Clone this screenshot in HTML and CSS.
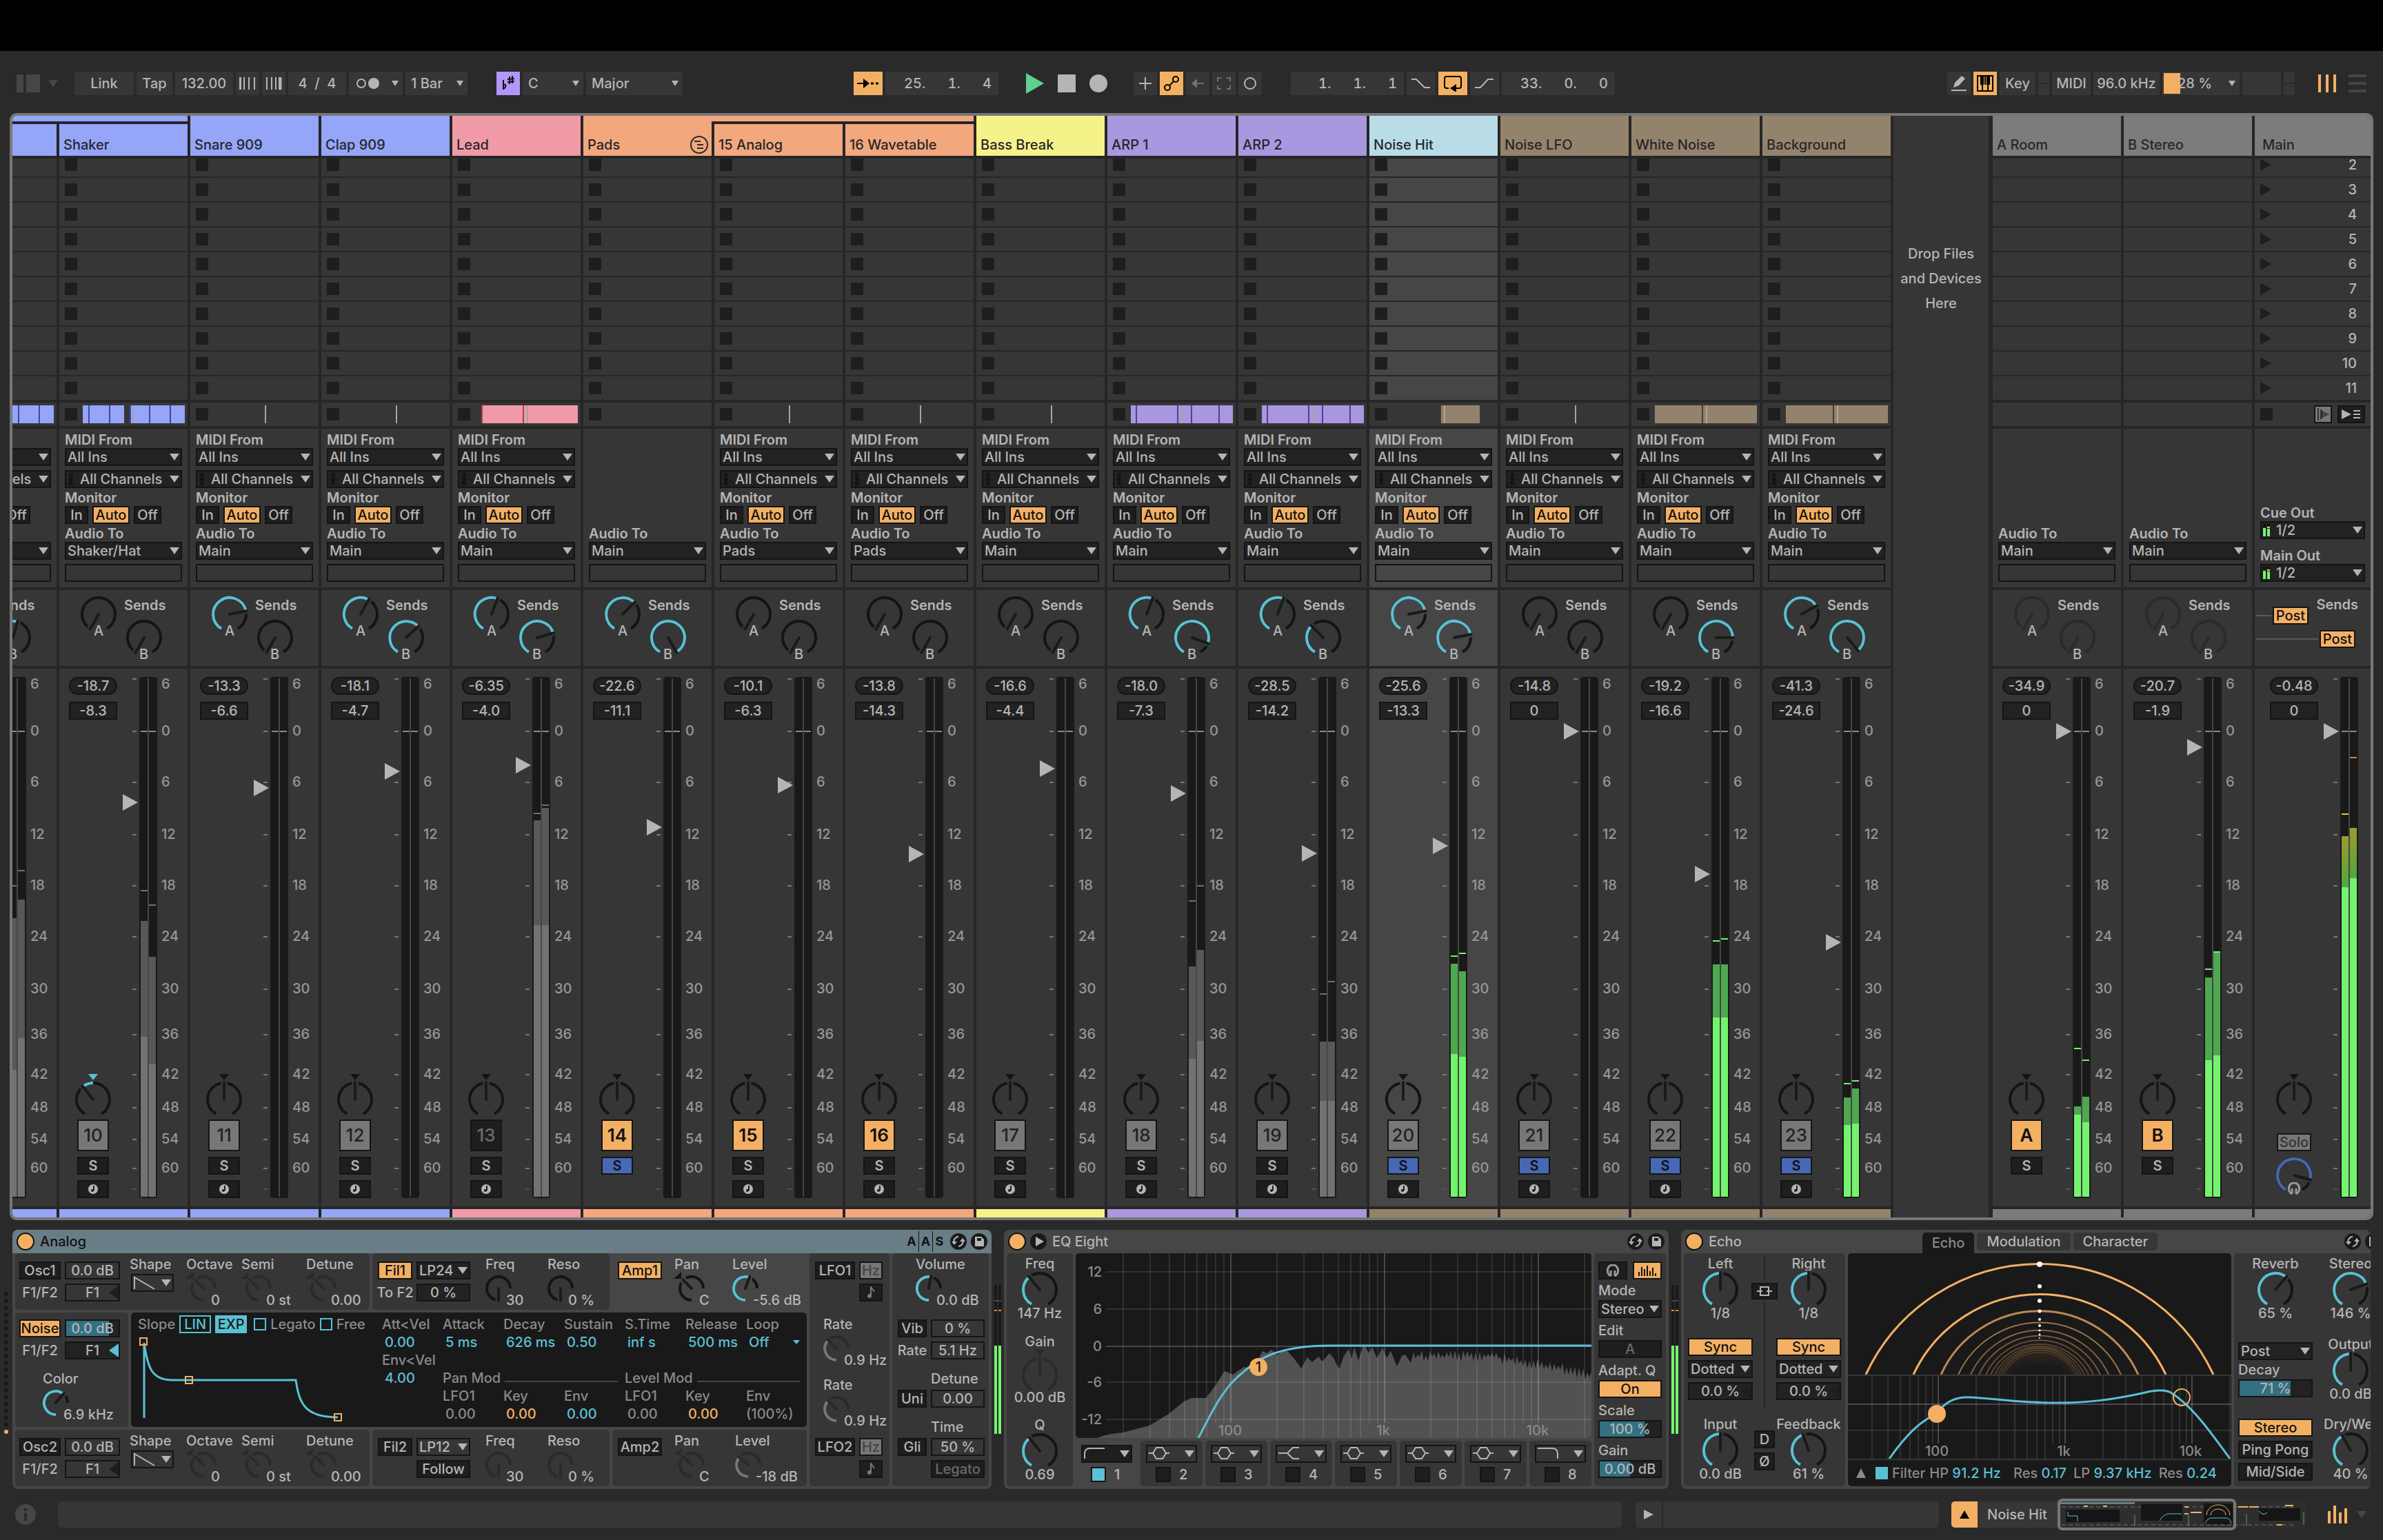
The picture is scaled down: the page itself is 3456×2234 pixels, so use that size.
FILE: index.html
```html
<!DOCTYPE html>
<html lang="en">
<head>
    <meta charset="UTF-8">
    <meta name="viewport" content="width=device-width, initial-scale=1.0">
    <title>Live Set</title>
    <link rel="stylesheet" href="styles.css">
</head>
<body>
    <div class="screen-top"></div>

    <header class="toolbar">
        <button class="browser-toggle" aria-label="Browser">
            <svg width="60" height="26"><path d="M0 0h10v26H0zM14 0h20v26H14z" fill="#464646"/><path d="M46 8h14l-7 11z" fill="#464646"/></svg>
        </button>
        <div class="group tempo">
            <button class="tool w86">Link</button>
            <button class="tool w52">Tap</button>
            <input class="tool w84" value="132.00" aria-label="Tempo">
            <button class="tool w34" aria-label="Nudge down"><svg width="24" height="20"><path d="M2 1v18M7 1v18M14 1v18M22 1v18" stroke="#b5b5b5" stroke-width="2"/><path d="M1 1v18" stroke="#b5b5b5" stroke-width="2"/></svg></button>
            <button class="tool w34" aria-label="Nudge up"><svg width="24" height="20"><path d="M2 1v18M9 1v18M15 1v18M20 1v18" stroke="#b5b5b5" stroke-width="2"/><path d="M22 1v18" stroke="#b5b5b5" stroke-width="3"/></svg></button>
            <input class="tool w84" value="4  /  4" aria-label="Time signature">
            <button class="tool w78 metro" aria-label="Metronome"><svg width="34" height="16"><circle cx="8" cy="8" r="6" fill="none" stroke="#b5b5b5" stroke-width="2"/><circle cx="26" cy="8" r="8" fill="#b5b5b5"/></svg><span class="caret"></span></button>
            <select class="tool w90 pick" aria-label="Quantization"><option>1 Bar</option></select>
        </div>
        <div class="group scale">
            <button class="tool w34 purple" aria-label="Scale mode"><svg width="20" height="22"><path d="M3 6v14M3 19c4-2 5-8 0-6" fill="none" stroke="#111" stroke-width="2"/><path d="M12 1v11M16 0v11M9 5l10-1M9 9l10-1" stroke="#111" stroke-width="2"/></svg></button>
            <select class="tool w88 pick" aria-label="Root note"><option>C</option></select>
            <select class="tool w140 pick" aria-label="Scale"><option>Major</option></select>
        </div>

        <div class="group transport">
            <button class="tool w42 orange" aria-label="Follow"><svg width="32" height="18"><path d="M0 9h12" stroke="#000" stroke-width="2"/><path d="M9 2l9 7-9 7z"/><path d="M20 9h4M27 9h4" stroke="#000" stroke-width="3"/></svg></button>
            <input class="tool w164 position" value="25.      1.      4" aria-label="Position">
        </div>
        <div class="group run">
            <button class="bare" aria-label="Play"><svg width="26" height="30"><path d="M0 0l26 15L0 30z" fill="#5fd18f"/></svg></button>
            <button class="bare" aria-label="Stop"><svg width="26" height="26"><path d="M0 0h26v26H0z" fill="#b5b5b5"/></svg></button>
            <button class="bare" aria-label="Record"><svg width="26" height="26"><circle cx="13" cy="13" r="13" fill="#b5b5b5"/></svg></button>
        </div>
        <div class="group overdub">
            <button class="tool w34" aria-label="Overdub"><svg width="18" height="18"><path d="M9 0v18M0 9h18" stroke="#b5b5b5" stroke-width="2"/></svg></button>
            <button class="tool w34 orange" aria-label="Automation arm"><svg width="24" height="24"><circle cx="18" cy="6" r="4" fill="none" stroke="#000" stroke-width="2"/><circle cx="6" cy="18" r="4" fill="none" stroke="#000" stroke-width="2"/><path d="M9 15l6-6" stroke="#000" stroke-width="2"/></svg></button>
            <button class="tool w34" aria-label="Re-enable automation"><svg width="18" height="14"><path d="M0 7l8-7v14z" fill="#707070"/><path d="M6 7h12" stroke="#707070" stroke-width="2"/></svg></button>
            <button class="tool w34" aria-label="Capture"><svg width="20" height="18"><path d="M6 1H1v5M14 1h5v5M6 17H1v-5M14 17h5v-5" fill="none" stroke="#707070" stroke-width="2"/></svg></button>
            <button class="tool w34" aria-label="Session record"><svg width="20" height="20"><circle cx="10" cy="10" r="8" fill="none" stroke="#b5b5b5" stroke-width="2"/></svg></button>
        </div>
        <div class="group loop">
            <input class="tool w164 position" value="1.      1.      1" aria-label="Loop start">
            <button class="tool w42" aria-label="Punch in"><svg width="28" height="14"><path d="M0 1h7l12 12h8" fill="none" stroke="#b5b5b5" stroke-width="2"/></svg></button>
            <button class="tool w42 orange" aria-label="Loop"><svg width="28" height="24"><path d="M8 19H5q-3 0-3-3V5q0-3 3-3h18q3 0 3 3v11q0 3-3 3h-4" fill="none" stroke="#000" stroke-width="2"/><path d="M10 19l9-6v12z"/></svg></button>
            <button class="tool w42" aria-label="Punch out"><svg width="28" height="14"><path d="M0 13h8L19 1h8" fill="none" stroke="#b5b5b5" stroke-width="2"/></svg></button>
            <input class="tool w164 position" value="33.      0.      0" aria-label="Loop length">
        </div>

        <div class="group prefs">
            <button class="tool w34" aria-label="Draw mode"><svg width="24" height="24"><path d="M4 18l2-7L16 1l5 4-9 10z" fill="#b5b5b5"/><path d="M1 22h22" stroke="#b5b5b5" stroke-width="2"/></svg></button>
            <button class="tool w34 orange" aria-label="Computer MIDI keyboard"><svg width="24" height="24"><path d="M1 1h22v22H1z" fill="none" stroke="#000" stroke-width="2"/><path d="M5 2h5v12H5zM14 2h5v12h-5z"/><path d="M8 13v9M16 13v9M12 2v12" stroke="#000" stroke-width="2"/></svg></button>
            <button class="tool w52">Key</button>
            <span class="io-led"><i></i><i></i></span>
            <button class="tool w56">MIDI</button>
            <button class="tool w96">96.0 kHz</button>
            <select class="tool w112 pick cpu" aria-label="CPU load"><option>28 %</option></select>
            <span class="tool w56"></span>
            <span class="io-led"><i></i><i></i></span>
        </div>
        <div class="group views">
            <button class="bare" aria-label="Session view"><svg width="28" height="26"><path d="M2 0v26M13 0v26M24 0v26" stroke="#f3b063" stroke-width="4"/></svg></button>
            <button class="bare" aria-label="Arrangement view"><svg width="26" height="26"><path d="M0 2h26M0 13h26M0 24h26" stroke="#464646" stroke-width="4"/></svg></button>
        </div>
    </header>

    <main class="session" id="session"></main>

    <section class="rack">
        <svg class="rack-dots" id="rackDots" width="6" height="216"></svg>

        <article class="device analog">
            <div class="device-title blue">
                <button class="power" aria-label="Analog on"></button>
                <h2>Analog</h2>
                <div class="aas"><b>A</b><b>A</b><b>S</b></div>
                <button class="round" aria-label="Hot-swap"><svg viewBox="-12 -12 24 24"><use href="#swap"/></svg></button>
                <button class="round" aria-label="Save preset"><svg viewBox="-12 -12 24 24"><use href="#disk"/></svg></button>
            </div>
            <div class="analog-body">
                <div class="analog-main">
                    <div class="strip">
                        <div class="panel osc">
                            <div class="src">
                                <button class="btn">Osc1</button><input class="num" value="0.0 dB" aria-label="Osc1 level">
                                <span class="lbl mid">F1/F2</span><input class="num bal" value="F1" aria-label="Osc1 balance">
                            </div>
                            <div class="shape"><span class="lbl">Shape</span><button class="picker clear" aria-label="Osc1 shape"><svg width="32" height="20"><path d="M1 19V2l29 17" fill="none" stroke="#b5b5b5" stroke-width="2"/></svg><span class="caret"></span></button></div>
                            <div class="dial w80"><span class="lbl">Octave</span><span data-knob="bi" data-at="-45" data-off></span><output>0</output></div>
                            <div class="dial w94"><span class="lbl">Semi</span><span data-knob="bi" data-at="-45" data-off></span><output>0 st</output></div>
                            <div class="dial"><span class="lbl">Detune</span><span data-knob="bi" data-at="-45" data-off></span><output>0.00</output></div>
                        </div>
                        <div class="panel filter">
                            <div class="src">
                                <button class="btn on">Fil1</button><select class="menu" aria-label="Filter 1 type"><option>LP24</option></select>
                                <span class="lbl mid">To F2</span><input class="num" value="0 %" aria-label="To F2">
                            </div>
                            <div class="dial w90"><span class="lbl">Freq</span><span data-knob="uni" data-at="-180"></span><output>30</output></div>
                            <div class="dial"><span class="lbl">Reso</span><span data-knob="uni" data-at="-180"></span><output>0 %</output></div>
                        </div>
                        <div class="panel amp chosen">
                            <button class="btn on">Amp1</button>
                            <div class="dial w88"><span class="lbl">Pan</span><span data-knob="bi" data-at="-45"></span><output>C</output></div>
                            <div class="dial"><span class="lbl">Level</span><span data-knob="uni" data-at="20"></span><output>-5.6 dB</output></div>
                        </div>
                    </div>
                    <div class="strip tall">
                        <div class="panel noise">
                            <div class="src">
                                <button class="btn on">Noise</button><input class="num fill" style="--fill:82%" value="0.0 dB" aria-label="Noise level">
                                <span class="lbl mid">F1/F2</span><input class="num bal teal" value="F1" aria-label="Noise balance">
                            </div>
                            <div class="dial"><span class="lbl">Color</span><span data-knob="uni" data-at="40"></span><output>6.9 kHz</output></div>
                        </div>
                        <div class="lcd envelope">
                            <div class="env">
                                <div class="env-top">
                                    <span>Slope</span>
                                    <button class="cyan-btn">LIN</button>
                                    <button class="cyan-btn on">EXP</button>
                                    <label><input type="checkbox">Legato</label>
                                    <label><input type="checkbox">Free</label>
                                </div>
                                <svg width="364" height="132"><path d="M19 123V14C24 50 30 68 60 68H239C244 100 250 122 300 122" fill="none" stroke="#5bc0d6" stroke-width="3"/><g fill="none" stroke="#f3b063" stroke-width="2"><path d="M13 7h10v10H13zM79 63h10v10H79zM295 117h10v10h-10z"/></g></svg>
                            </div>
                            <div class="params">
                                <span>Att&lt;Vel</span><span>Attack</span><span>Decay</span><span>Sustain</span><span>S.Time</span><span>Release</span><span>Loop</span>
                                <b>0.00</b><b>5 ms</b><b>626 ms</b><b>0.50</b><b>inf s</b><b>500 ms</b><b class="loop-off">Off</b>
                                <span class="row-start">Env&lt;Vel</span>
                                <b class="row-start">4.00</b><span class="rule">Pan Mod</span><span class="rule">Level Mod</span>
                                <span class="second">LFO1</span><span>Key</span><span>Env</span><span>LFO1</span><span>Key</span><span>Env</span>
                                <b class="second grey">0.00</b><b class="amber">0.00</b><b>0.00</b><b class="grey">0.00</b><b class="amber">0.00</b><span>(100%)</span>
                            </div>
                        </div>
                    </div>
                    <div class="strip">
                        <div class="panel osc">
                            <div class="src">
                                <button class="btn">Osc2</button><input class="num" value="0.0 dB" aria-label="Osc2 level">
                                <span class="lbl mid">F1/F2</span><input class="num bal" value="F1" aria-label="Osc2 balance">
                            </div>
                            <div class="shape"><span class="lbl">Shape</span><button class="picker clear" aria-label="Osc2 shape"><svg width="32" height="20"><path d="M1 19V2l29 17" fill="none" stroke="#b5b5b5" stroke-width="2"/></svg><span class="caret"></span></button></div>
                            <div class="dial w80"><span class="lbl">Octave</span><span data-knob="bi" data-at="-45" data-off></span><output>0</output></div>
                            <div class="dial w94"><span class="lbl">Semi</span><span data-knob="bi" data-at="-45" data-off></span><output>0 st</output></div>
                            <div class="dial"><span class="lbl">Detune</span><span data-knob="bi" data-at="-45" data-off></span><output>0.00</output></div>
                        </div>
                        <div class="panel filter">
                            <div class="src">
                                <button class="btn">Fil2</button><select class="menu clear" aria-label="Filter 2 type"><option>LP12</option></select>
                                <span></span><button class="btn">Follow</button>
                            </div>
                            <div class="dial w90"><span class="lbl">Freq</span><span data-knob="uni" data-at="-180" data-off></span><output>30</output></div>
                            <div class="dial"><span class="lbl">Reso</span><span data-knob="uni" data-at="-180" data-off></span><output>0 %</output></div>
                        </div>
                        <div class="panel amp">
                            <button class="btn">Amp2</button>
                            <div class="dial w88"><span class="lbl">Pan</span><span data-knob="bi" data-at="-45" data-off></span><output>C</output></div>
                            <div class="dial"><span class="lbl">Level</span><span data-knob="uni" data-at="-50" data-off></span><output>-18 dB</output></div>
                        </div>
                    </div>
                </div>
                <div class="panel lfo">
                    <div class="lfo-src"><button class="btn">LFO1</button><button class="btn grey">Hz</button><button class="btn note" aria-label="LFO1 sync"><svg width="12" height="18"><use href="#note"/></svg></button></div>
                    <div class="dial"><span class="lbl">Rate</span><span data-knob="uni" data-at="-45" data-off></span><output>0.9 Hz</output></div>
                    <div class="dial"><span class="lbl">Rate</span><span data-knob="uni" data-at="-45" data-off></span><output>0.9 Hz</output></div>
                    <div class="lfo-src"><button class="btn">LFO2</button><button class="btn grey">Hz</button><button class="btn note" aria-label="LFO2 sync"><svg width="12" height="18"><use href="#note"/></svg></button></div>
                </div>
                <div class="panel volume">
                    <div class="dial"><span class="lbl">Volume</span><span data-knob="uni" data-at="10"></span><output>0.0 dB</output></div>
                    <div class="pairs">
                        <button class="btn">Vib</button><input class="num" value="0 %" aria-label="Vibrato amount">
                        <span class="lbl mid">Rate</span><input class="num" value="5.1 Hz" aria-label="Vibrato rate">
                    </div>
                    <div class="pairs">
                        <span></span><span class="lbl">Detune</span>
                        <button class="btn">Uni</button><input class="num" value="0.00" aria-label="Unison detune">
                    </div>
                    <div class="pairs">
                        <span></span><span class="lbl">Time</span>
                        <button class="btn">Gli</button><input class="num" value="50 %" aria-label="Glide time">
                        <span></span><button class="btn faint">Legato</button>
                    </div>
                </div>
            </div>
        </article>

        <svg class="device-meter" width="10" height="216"><use href="#devMeter"/></svg>

        <article class="device eq">
            <div class="device-title">
                <button class="power" aria-label="EQ Eight on"></button>
                <button class="round" aria-label="Unfold"><svg viewBox="-12 -12 24 24"><path d="M-4-7L8 0-4 7z" fill="#b5b5b5"/></svg></button>
                <h2>EQ Eight</h2>
                <button class="round push" aria-label="Hot-swap"><svg viewBox="-12 -12 24 24"><use href="#swap"/></svg></button>
                <button class="round" aria-label="Save preset"><svg viewBox="-12 -12 24 24"><use href="#disk"/></svg></button>
            </div>
            <div class="device-body">
                <div class="panel eq-knobs">
                    <div class="big-dial"><span class="lbl">Freq</span><span data-knob="big" data-at="-40"></span><output>147 Hz</output></div>
                    <div class="big-dial"><span class="lbl">Gain</span><span data-knob="pan" data-at="0" data-off></span><output>0.00 dB</output></div>
                    <div class="big-dial"><span class="lbl">Q</span><span data-knob="big" data-at="-38"></span><output>0.69</output></div>
                </div>
                <div class="eq-main">
                    <svg class="lcd" id="eqGraph" width="748" height="268"></svg>
                    <div class="bands" id="bands"></div>
                </div>
                <div class="panel eq-side">
                    <div class="two">
                        <button class="btn" aria-label="Audition"><svg width="20" height="18"><use href="#phones"/></svg></button>
                        <button class="btn on" aria-label="Analyze"><svg width="28" height="16"><path d="M2 16v-6M6 16V3M10 16V6M14 16V1M18 16V9M22 16V4M26 16v-4" stroke="#111" stroke-width="2"/></svg></button>
                    </div>
                    <label class="lbl" for="eqMode">Mode</label><select class="menu" id="eqMode"><option>Stereo</option></select>
                    <span class="lbl">Edit</span><button class="btn faint">A</button>
                    <span class="lbl">Adapt. Q</span><button class="btn on">On</button>
                    <label class="lbl" for="eqScale">Scale</label><input class="num fill" id="eqScale" style="--fill:74%" value="100 %">
                    <label class="lbl" for="eqGain">Gain</label><input class="num fill" id="eqGain" style="--fill:50%" value="0.00 dB">
                </div>
            </div>
        </article>

        <svg class="device-meter" width="10" height="216"><use href="#devMeter"/></svg>

        <article class="device echo">
            <div class="device-title">
                <button class="power" aria-label="Echo on"></button>
                <h2>Echo</h2>
                <nav class="tabs"><button class="tab active">Echo</button><button class="tab">Modulation</button><button class="tab">Character</button></nav>
                <button class="round push" aria-label="Hot-swap"><svg viewBox="-12 -12 24 24"><use href="#swap"/></svg></button>
                <button class="round" aria-label="Save preset"><svg viewBox="-12 -12 24 24"><use href="#disk"/></svg></button>
            </div>
            <div class="device-body">
                <div class="panel echo-time">
                    <div class="echo-col">
                        <div class="big-dial"><span class="lbl">Left</span><span data-knob="big" data-at="0"></span><output>1/8</output></div>
                        <div class="stack"><button class="btn on">Sync</button><select class="menu" aria-label="Left sync mode"><option>Dotted</option></select><input class="num bal dimbal" value="0.0 %" aria-label="Left offset"></div>
                        <div class="big-dial"><span class="lbl">Input</span><span data-knob="big" data-at="0"></span><output>0.0 dB</output></div>
                    </div>
                    <div class="echo-mid">
                        <i class="v-line short"></i>
                        <button class="btn link" aria-label="Link"><svg width="22" height="16"><path d="M5 5V2h12v3M5 11v3h12v-3M0 8h8M14 8h8M5 5v6M17 5v6" fill="none" stroke="#b5b5b5" stroke-width="2"/></svg></button>
                        <i class="v-line"></i>
                        <button class="btn">D</button>
                        <button class="btn">Ø</button>
                    </div>
                    <div class="echo-col">
                        <div class="big-dial"><span class="lbl">Right</span><span data-knob="big" data-at="0"></span><output>1/8</output></div>
                        <div class="stack"><button class="btn on">Sync</button><select class="menu" aria-label="Right sync mode"><option>Dotted</option></select><input class="num bal dimbal" value="0.0 %" aria-label="Right offset"></div>
                        <div class="big-dial"><span class="lbl">Feedback</span><span data-knob="big" data-at="-20"></span><output>61 %</output></div>
                    </div>
                </div>
                <div class="lcd echo-view">
                    <svg id="echoArcs" width="556" height="176"></svg>
                    <svg id="echoFilter" width="556" height="120"></svg>
                    <div class="echo-foot">
                        <svg width="14" height="14"><path d="M0 14L7 0l7 14z" fill="#8a8a8a"/></svg>
                        <label><input type="checkbox" checked>Filter</label>
                        <span>HP <b>91.2 Hz</b></span>
                        <span class="res">Res <b>0.17</b></span>
                        <span>LP <b>9.37 kHz</b></span>
                        <span>Res <b>0.24</b></span>
                    </div>
                </div>
                <div class="panel echo-out">
                    <div class="echo-out-a">
                        <div class="big-dial"><span class="lbl">Reverb</span><span data-knob="big" data-at="40"></span><output>65 %</output></div>
                        <div class="stack tight"><select class="menu" aria-label="Reverb location"><option>Post</option></select><label class="lbl" for="decay">Decay</label><input class="num fill" id="decay" style="--fill:71%" value="71 %"></div>
                        <div class="stack"><button class="btn on">Stereo</button><button class="btn">Ping Pong</button><button class="btn">Mid/Side</button></div>
                    </div>
                    <div class="echo-out-b">
                        <div class="big-dial"><span class="lbl">Stereo</span><span data-knob="big" data-at="70"></span><output>146 %</output></div>
                        <div class="big-dial"><span class="lbl">Output</span><span data-knob="big" data-at="0"></span><output>0.0 dB</output></div>
                        <div class="big-dial"><span class="lbl">Dry/Wet</span><span data-knob="big" data-at="-30"></span><output>40 %</output></div>
                    </div>
                </div>
            </div>
        </article>
    </section>

    <footer class="status">
        <svg class="info" width="30" height="30"><circle cx="15" cy="15" r="15" fill="#464646"/><path d="M15 6v4M15 13v11" stroke="#2a2a2a" stroke-width="4"/></svg>
        <div class="status-text"></div>
        <button class="status-play" aria-label="Preview"><svg width="14" height="14"><path d="M0 0l14 7-14 7z" fill="#b5b5b5"/></svg></button>
        <div class="status-bar"></div>
        <div class="chain">
            <button class="chain-fold" aria-label="Hide device view"><svg width="14" height="12"><path d="M0 12L7 0l7 12z"/></svg></button>
            <span class="chain-name">Noise Hit</span>
            <svg class="overview" id="overview" width="360" height="46"></svg>
        </div>
        <button class="bare levels" aria-label="Mixer"><svg width="30" height="26"><path d="M2 26V8M10 26V0M18 26V10M26 26V4" stroke="#f3b063" stroke-width="4"/></svg></button>
        <svg class="fold" width="14" height="10"><path d="M0 0h14l-7 10z" fill="#464646"/></svg>
    </footer>

    <svg class="defs" width="0" height="0">
        <defs>
            <g id="swap" fill="none" stroke="#b5b5b5" stroke-width="2"><path d="M-6 3A7 7 0 0 1 0-7M6-3A7 7 0 0 1 0 7"/><path d="M-10 0l4 5 4-5zM10 0L6-5 2 0z" fill="#b5b5b5" stroke="none"/></g>
            <path id="disk" d="M-6-7H3L7-3V7H-6zM-3-5v4h6v-4z" fill="#b5b5b5" fill-rule="evenodd"/>
            <path id="phones" d="M7 17C0 14 1 1 10 1s10 13 3 16M7 9v8M13 9v8" fill="none" stroke="#9a9a9a" stroke-width="3"/>
            <g id="note"><path d="M6 14V1l5 7" fill="none" stroke="#7a7a7a" stroke-width="2"/><circle cx="4" cy="14" r="3" fill="#7a7a7a"/></g>
            <g id="devMeter"><path d="M0 0h4v216H0zM6 0h4v216H6z" fill="#191919"/><path d="M0 23h10" stroke="#464646" stroke-width="2"/><path d="M0 37h4M6 37h4" stroke="#e08a3c" stroke-width="2"/><path d="M0 88h4v128H0zM6 88h4v128H6z" fill="#73f46e"/></g>
        </defs>
    </svg>

    <script src="script.js"></script>
</body>
</html>
```
FILE: styles.css
```css
* {
    box-sizing: border-box;
}

body {
    margin: 0;
    min-height: 100vh;
    background: #2a2a2a;
    color: #b5b5b5;
    font: 500 20px/20px Inter, 'Liberation Sans', sans-serif;
    overflow-x: hidden;
}

button, input, select {
    font: inherit;
    color: inherit;
    margin: 0;
    padding: 0;
    border: 0;
    border-radius: 0;
    background: none;
}

select {
    appearance: none;
}

svg {
    display: block;
    flex: none;
}

h2 {
    margin: 0;
    font-size: 20px;
    font-weight: 500;
}

.defs {
    position: absolute;
}

.caret {
    width: 14px;
    height: 10px;
    background: #b5b5b5;
    clip-path: polygon(0 0, 100% 0, 50% 100%);
}

/* ---------- toolbar ---------- */
.screen-top {
    height: 74px;
    background: #000;
}

.toolbar {
    display: flex;
    align-items: center;
    height: 90px;
    padding: 4px 24px 0;
}

.group {
    display: flex;
    align-items: center;
    gap: 4px;
}

.tempo { margin-left: 24px; }
.scale { margin-left: 42px; }
.transport { margin-left: 248px; }
.run { margin-left: 40px; gap: 20px; }
.overdub { margin-left: 38px; }
.loop { margin-left: 42px; }
.prefs { margin-left: auto; }
.views { margin-left: 34px; gap: 16px; }

.tool {
    display: flex;
    align-items: center;
    justify-content: center;
    height: 34px;
    background: #363636;
    text-align: center;
    white-space: pre;
}

.tool.orange { background: #f3b063; }
.tool.purple { background: #b197f7; }

.w34 { width: 34px; }
.w42 { width: 42px; }
.w52 { width: 52px; }
.w56 { width: 56px; }
.w78 { width: 78px; }
.w84 { width: 84px; }
.w86 { width: 86px; }
.w88 { width: 88px; }
.w90 { width: 90px; }
.w96 { width: 96px; }
.w112 { width: 112px; }
.w140 { width: 140px; }
.w164 { width: 164px; }

.position {
    text-align: right;
    padding-right: 10px;
    font-variant-numeric: tabular-nums;
}

.metro {
    justify-content: space-between;
    padding: 0 6px 0 10px;
}

.metro .caret {
    width: 10px;
    height: 8px;
}

.pick {
    padding-left: 8px;
    text-align: left;
    background: #363636 url("data:image/svg+xml,%3Csvg xmlns='http://www.w3.org/2000/svg' width='10' height='8'%3E%3Cpath d='M0 0h10L5 8z' fill='%23b5b5b5'/%3E%3C/svg%3E") no-repeat right 6px center;
}

.cpu {
    padding-left: 22px;
    background-image: url("data:image/svg+xml,%3Csvg xmlns='http://www.w3.org/2000/svg' width='10' height='8'%3E%3Cpath d='M0 0h10L5 8z' fill='%23b5b5b5'/%3E%3C/svg%3E"), linear-gradient(#f3b063, #f3b063);
    background-position: right 6px center, 2px 2px;
    background-size: 10px 8px, 24px 30px;
}

.io-led {
    display: flex;
    flex-direction: column;
    gap: 2px;
}

.io-led i {
    width: 16px;
    height: 16px;
    background: #363636;
}

/* ---------- session ---------- */
.session {
    display: flex;
    gap: 4px;
    margin: 0 14px;
    border: 4px solid #777;
    border-radius: 10px;
    background: #262626;
    overflow: hidden;
}

.track {
    flex: none;
    display: flex;
    flex-direction: column;
    gap: 4px;
    width: 186px;
    --panel: #363636;
}

.track.selected { --panel: #464646; }
.track.main { width: 168px; }

.track-clip {
    flex: none;
    display: flex;
    justify-content: flex-end;
    width: 64px;
    overflow: hidden;
}

.track-head {
    display: flex;
    flex-direction: column;
    height: 58px;
    color: #26262c;
}

.track-band {
    height: 8px;
    margin-bottom: 4px;
    background: var(--color);
    box-shadow: -4px 0 0 var(--color);
}

.track-name {
    flex: 1;
    display: flex;
    align-items: flex-end;
    justify-content: space-between;
    padding: 0 5px 6px 6px;
    background: var(--color);
}

.track.selected .track-name { background: #b8dde7; }
.track.main .track-name { padding-left: 11px; }

.track-name svg { margin-bottom: -3px; }

.slots {
    display: grid;
    gap: 2px;
}

.slot {
    display: flex;
    align-items: center;
    justify-content: space-between;
    height: 34px;
    padding: 0 20px 0 8px;
    background: var(--panel);
}

.slot:first-child {
    height: 26px;
    padding-bottom: 8px;
}

.square {
    width: 18px;
    height: 18px;
    background: #1e1e1e;
}

.scene-play {
    width: 16px;
    height: 18px;
    background: #1e1e1e;
    clip-path: polygon(0 0, 100% 50%, 0 100%);
}

.stop-row {
    display: flex;
    align-items: center;
    height: 34px;
    padding-left: 8px;
    background: #363636;
}

.stop-row svg { margin-left: 8px; }
.main .stop-row svg { margin-left: 0; }

.stop-btn {
    display: flex;
    align-items: center;
    justify-content: center;
    width: 26px;
    height: 26px;
    margin-left: 60px;
    border: 2px solid #141414;
    background: #777;
}

.stop-btn.wide {
    width: 40px;
    margin-left: 8px;
    background: #1e1e1e;
}

.io {
    display: flex;
    flex-direction: column;
    justify-content: flex-end;
    height: 230px;
    padding: 0 8px 8px;
    background: var(--panel);
}

.io .lbl {
    line-height: 28px;
    height: 26px;
    font-weight: 600;
}

.io .menu + .menu,
.blank {
    margin-top: 6px;
}

.main .io .lbl + .menu { margin-bottom: 10px; }
.main .io .menu:last-child { margin-bottom: 0; }

.blank {
    height: 26px;
    border: 2px solid #141414;
    background: none;
    width: 100%;
}

.monitor {
    display: flex;
    gap: 6px;
}

.monitor .btn:nth-child(1) { width: 34px; }
.monitor .btn:nth-child(2) { width: 54px; }
.monitor .btn:nth-child(3) { width: 40px; }

.menu {
    height: 26px;
    padding: 0 4px 0 2px;
    border: 2px solid #141414;
    background: #222 url("data:image/svg+xml,%3Csvg xmlns='http://www.w3.org/2000/svg' width='14' height='10'%3E%3Cpath d='M0 0h14L7 10z' fill='%23b5b5b5'/%3E%3C/svg%3E") no-repeat right 2px center;
    overflow: hidden;
    flex: none;
}

.menu.channels {
    padding-left: 20px;
    background-image: url("data:image/svg+xml,%3Csvg xmlns='http://www.w3.org/2000/svg' width='14' height='10'%3E%3Cpath d='M0 0h14L7 10z' fill='%23b5b5b5'/%3E%3C/svg%3E"), url("data:image/svg+xml,%3Csvg xmlns='http://www.w3.org/2000/svg' width='6' height='18'%3E%3Cg fill='%23141414'%3E%3Ccircle cx='3' cy='3' r='3'/%3E%3Ccircle cx='3' cy='9' r='3'/%3E%3Ccircle cx='3' cy='15' r='3'/%3E%3C/g%3E%3C/svg%3E");
    background-position: right 2px center, 4px center;
}

.menu.output {
    padding-left: 21px;
    background-image: url("data:image/svg+xml,%3Csvg xmlns='http://www.w3.org/2000/svg' width='14' height='10'%3E%3Cpath d='M0 0h14L7 10z' fill='%23b5b5b5'/%3E%3C/svg%3E"), url("data:image/svg+xml,%3Csvg xmlns='http://www.w3.org/2000/svg' width='10' height='18'%3E%3Cpath d='M0 6h4v12H0zM6 7h4v11H6z' fill='%2373f46e'/%3E%3Cpath d='M6 4h4v2H6z' fill='%23e8d04a'/%3E%3Cpath d='M0 0h4v4H0zM6 0h4v3H6z' fill='%23101010'/%3E%3C/svg%3E");
    background-position: right 2px center, 2px center;
}

.btn {
    display: flex;
    align-items: center;
    justify-content: center;
    height: 26px;
    border: 2px solid #141414;
    background: #1e1e1e;
    white-space: nowrap;
    flex: none;
}

.btn.on {
    background: #f3b063;
    color: #111;
}

.btn.blue {
    background: #4768b4;
    color: #111;
}

.btn.grey {
    background: #777;
    color: #444;
}

.btn.faint { color: #6a6a6a; }

.sends {
    display: grid;
    grid-template-columns: 52px 66px;
    padding: 9px 0 0 31px;
    height: 110px;
    background: var(--panel);
}

.send {
    display: flex;
    flex-direction: column;
    align-items: center;
    grid-row: 1;
    grid-column: 1;
}

.send span { margin-top: -12px; }
.send + .send {
    grid-column: 2;
    margin-top: 34px;
    align-items: flex-start;
    padding-left: 14px;
}
.send + .send span { margin-left: 19px; }

.sends .title,
.main-sends .title {
    font-weight: 600;
}

.sends .title {
    grid-row: 1;
    grid-column: 2;
    justify-self: start;
    padding-left: 11px;
    height: 24px;
    line-height: 26px;
}

.main-sends {
    display: grid;
    grid-template-columns: 26px 52px 16px 52px;
    grid-template-rows: 15px 26px 8px 26px;
    height: 110px;
    padding: 9px 0 0;
    background: var(--panel);
    line-height: 24px;
}

.main-sends .title {
    grid-column: 3 / 5;
    text-align: right;
    margin-right: -4px;
}

.main-sends i {
    height: 2px;
    margin: 0 2px;
    align-self: center;
    background: #5a5a5a;
    grid-row: 2;
}

.main-sends i + i {
    grid-row: 4;
    grid-column: 1 / 4;
}

.main-sends .btn { grid-row: 2; }
.main-sends .btn + .btn {
    grid-row: 4;
    grid-column: 4;
}

.mixer {
    display: grid;
    grid-template-columns: 70px 22px 26px 1fr;
    height: 780px;
    padding: 12px 0 12px 14px;
    background: var(--panel);
}

.main .mixer { padding-left: 22px; }

.strip-left {
    display: flex;
    flex-direction: column;
    align-items: center;
}

.readout {
    width: 70px;
    height: 26px;
    border: 2px solid #141414;
    background: #222;
    text-align: center;
    line-height: 22px;
}

.readout.pill { border-radius: 13px; }
.readout + .readout { margin-top: 10px; }

.strip-left [data-knob] { margin-top: auto; }

.activator {
    width: 46px;
    height: 46px;
    margin-top: 5px;
    font-size: 26px;
    font-weight: 600;
}

.activator.grey { font-weight: 500; color: #222; }
.activator.faint { font-weight: 500; }

.small {
    width: 46px;
    margin-top: 8px;
    font-weight: 600;
}

.no-arm {
    height: 26px;
    margin-top: 8px;
}

.solo-gap { height: 25px; }

.solo-cue {
    width: 50px;
    margin-bottom: 9px;
}

.btn.solo-cue { color: #333; }

.cue {
    display: grid;
    justify-items: center;
    align-items: end;
    margin-bottom: 7px;
}

.strip-left .cue [data-knob] { margin-top: 0; }

.cue > * { grid-area: 1 / 1; }
.cue > svg { margin-bottom: -2px; }

.fader-box {
    display: grid;
    width: 22px;
    margin-left: 8px;
}

.fader-box > * { grid-area: 1 / 1; }
.fader-box svg { margin-left: 14px; }

.fader {
    appearance: none;
    writing-mode: vertical-lr;
    direction: rtl;
    width: 22px;
    height: 756px;
}

.fader::-webkit-slider-thumb {
    appearance: none;
    width: 22px;
    height: 24px;
    background: #b5b5b5;
    clip-path: polygon(0 0, 100% 50%, 0 100%);
}

.meter { margin-left: 10px; }

.db {
    display: grid;
    grid-template-rows: 68px 74px 76px 74px 74px 76px 66px 58px 48px 46px 42px 20px;
    padding-left: 16px;
    color: #969696;
}

.track-foot {
    height: 12px;
    background: var(--color);
}

.drop {
    flex: 1;
    margin-right: 2px;
    padding-top: 182px;
    background: #363636;
    text-align: center;
    line-height: 36px;
}

/* ---------- devices ---------- */
.rack {
    display: flex;
    gap: 4px;
    margin: 14px 18px 0 6px;
}

.rack-dots { margin: 90px 2px 0 0; }
.device-meter { margin-top: 80px; }

.device {
    flex: none;
    height: 376px;
    border-radius: 8px;
    background: #464646;
    overflow: hidden;
}

.device-title {
    display: flex;
    align-items: center;
    gap: 6px;
    height: 34px;
    padding: 0 6px;
}

.device-title.blue {
    background: #697d87;
    color: #111;
}

.device-title h2 { margin-left: 2px; }

.power {
    width: 26px;
    height: 26px;
    border: 2px solid #111;
    border-radius: 50%;
    background: #f3b063;
    flex: none;
}

.round {
    width: 24px;
    height: 24px;
    border-radius: 50%;
    background: #1a1a1a;
    flex: none;
}

.push { margin-left: auto; }

.aas {
    display: flex;
    margin-left: auto;
    font-size: 18px;
    line-height: 30px;
}

.aas b {
    width: 20px;
    text-align: center;
}

.aas b + b { border-left: 1px solid #111; }

.device-body,
.analog-body {
    display: flex;
    gap: 4px;
    height: 342px;
    padding: 0 4px 4px;
}

.analog-main {
    display: flex;
    flex-direction: column;
    gap: 4px;
}

.strip {
    display: flex;
    gap: 4px;
    height: 82px;
}

.strip.tall { height: 166px; }

.panel {
    flex: none;
    border-radius: 5px;
    background: #363636;
    --panel: #363636;
}

.panel.chosen { background: #464646; --panel: #464646; }

.lcd {
    border-radius: 5px;
    background: #191919;
    overflow: hidden;
}

.osc, .filter, .amp {
    display: flex;
    align-items: flex-start;
    padding: 6px;
}

.osc { width: 514px; }
.filter { width: 344px; padding: 6px 8px; }
.amp { width: 282px; padding: 6px 8px; }
.amp .btn { width: 64px; margin: 6px 18px 0 0; }

.src {
    display: grid;
    grid-template-columns: 60px 80px;
    gap: 6px;
    margin-top: 6px;
}

.filter .src {
    grid-template-columns: 50px 78px;
    margin-right: 22px;
}

.lbl.mid {
    line-height: 26px;
    white-space: nowrap;
    justify-self: center;
}

.num {
    width: 100%;
    height: 26px;
    border: 2px solid #141414;
    text-align: center;
}

.filter .num { background: #222; }

.bal {
    background: url("data:image/svg+xml,%3Csvg xmlns='http://www.w3.org/2000/svg' width='14' height='20'%3E%3Cpath d='M14 0v20L0 10z' fill='%231e1e1e'/%3E%3C/svg%3E") no-repeat right center;
}

.bal.teal {
    background: #222 url("data:image/svg+xml,%3Csvg xmlns='http://www.w3.org/2000/svg' width='14' height='20'%3E%3Cpath d='M14 0v20L0 10z' fill='%235bc0d6'/%3E%3C/svg%3E") no-repeat right center;
}

.bal.dimbal { background-color: #222; }

.num.fill {
    background: linear-gradient(90deg, #327082 var(--fill), #222 var(--fill));
}

.shape {
    width: 82px;
    margin-left: 14px;
}

.shape .lbl { display: block; margin-bottom: 4px; }
.shape .picker { width: 62px; margin-left: 2px; }

.picker {
    display: flex;
    align-items: center;
    justify-content: space-between;
    height: 26px;
    padding: 0 2px;
    border: 2px solid #141414;
    background: #1e1e1e;
}

.clear { background-color: transparent; }

.dial {
    display: grid;
    grid-template-columns: 38px 1fr;
    grid-template-rows: 20px 44px;
    white-space: nowrap;
}

.dial .lbl { grid-column: 1 / 3; }
.dial [data-knob] { margin-top: 6px; }
.dial [data-knob="bi"] { margin-left: 6px; }
.dial output {
    align-self: end;
    margin: 0 0 -8px -8px;
}
.dial [data-knob="bi"] + output { margin-left: -2px; }

.w80 { width: 80px; }
.w94 { width: 94px; }

.noise {
    width: 164px;
    padding: 4px 6px;
}

.noise .dial { margin: 18px 0 0 34px; }

.envelope {
    display: flex;
    width: 980px;
}

.env {
    width: 364px;
    color: #8a8a8a;
}

.env-top {
    display: flex;
    align-items: center;
    gap: 6px;
    padding: 4px 0 0 10px;
    white-space: nowrap;
}

.env-top label,
.echo-foot label {
    display: flex;
    align-items: center;
    gap: 6px;
}

.env-top .cyan-btn + label { margin-left: 4px; }

.cyan-btn {
    width: 46px;
    height: 26px;
    border: 2px solid #5bc0d6;
    color: #5bc0d6;
    flex: none;
}

.cyan-btn.on {
    background: #5bc0d6;
    color: #191919;
}

input[type="checkbox"] {
    appearance: none;
    width: 18px;
    height: 18px;
    border: 2px solid #5bc0d6;
}

input[type="checkbox"]:checked { background: #5bc0d6; }

.params {
    display: grid;
    grid-template-columns: repeat(7, 88px);
    grid-auto-rows: 26px;
    margin-top: 4px;
    line-height: 26px;
    color: #8a8a8a;
    white-space: nowrap;
}

.params b {
    padding-left: 4px;
    font-weight: 500;
    color: #5bc0d6;
}

.params .grey { color: #8a8a8a; }
.params .amber { color: #f3b063; }
.params .row-start { grid-column: 1; }
.params .second { grid-column: 2; }

.rule {
    grid-column: span 3;
    display: flex;
    align-items: center;
    gap: 6px;
}

.rule::after {
    content: "";
    flex: 1;
    height: 2px;
    margin: 10px 10px 0 0;
    background: #464646;
}

.loop-off {
    background: url("data:image/svg+xml,%3Csvg xmlns='http://www.w3.org/2000/svg' width='10' height='6'%3E%3Cpath d='M0 0h10L5 6z' fill='%235bc0d6'/%3E%3C/svg%3E") no-repeat right 10px center;
}

.lfo {
    display: flex;
    flex-direction: column;
    justify-content: space-between;
    width: 116px;
    padding: 12px 8px;
}

.lfo-src {
    display: grid;
    grid-template-columns: 58px 34px;
    gap: 6px;
}

.lfo-src .note { grid-column: 2; }
.lfo .dial { margin-left: 12px; }

.volume {
    width: 140px;
    padding: 6px 6px 12px 8px;
}

.volume .dial { margin-left: 26px; }

.pairs {
    display: grid;
    grid-template-columns: 42px 78px;
    gap: 6px;
    margin-top: 26px;
}

.pairs ~ .pairs { row-gap: 6px; margin-top: 18px; }

.eq-knobs {
    display: flex;
    flex-direction: column;
    justify-content: space-between;
    width: 96px;
    padding: 5px 0 7px;
}

.big-dial {
    display: flex;
    flex-direction: column;
    align-items: center;
    white-space: nowrap;
}

.big-dial [data-knob] { margin: 2px 0 -2px; }

.eq-main {
    display: flex;
    flex-direction: column;
    gap: 4px;
    width: 748px;
}

.bands {
    display: grid;
    grid-template-columns: repeat(8, 90px);
    gap: 4px;
    height: 66px;
}

.band {
    padding: 6px 8px;
    border-radius: 5px;
    background: #363636;
}

.band.chosen { background: none; }
.band .picker { width: 74px; }

.band label {
    display: flex;
    align-items: center;
    gap: 12px;
    margin: 6px 0 0 14px;
}

.band input {
    width: 22px;
    height: 22px;
    border-color: #141414;
    background: #1e1e1e;
}

.eq-side {
    display: flex;
    flex-direction: column;
    width: 104px;
    padding: 12px 6px;
}

.eq-side .lbl {
    padding-top: 4px;
    height: 32px;
    line-height: 28px;
}

.two {
    display: grid;
    grid-template-columns: 42px 42px;
    gap: 8px;
    margin-bottom: -2px;
}

.eq { width: 964px; }
.analog { width: 1420px; }
.echo { flex: 1; min-width: 0; }

.echo .device-title { padding-right: 0; margin-right: -16px; }

.tabs {
    display: flex;
    gap: 4px;
    align-self: stretch;
    align-items: flex-start;
    padding-top: 4px;
    margin-left: 256px;
}

.tab {
    height: 26px;
    padding: 0 14px;
    border-radius: 5px;
    background: #363636;
}

.tab.active {
    height: 30px;
    border-radius: 5px 5px 0 0;
    background: #191919;
    color: #8a8a8a;
}

.echo-time {
    display: grid;
    grid-template-columns: 94px 34px 94px;
    width: 234px;
    padding: 5px 6px 8px;
}

.echo-col,
.echo-out-a,
.echo-out-b {
    display: flex;
    flex-direction: column;
    justify-content: space-between;
}

.stack {
    display: flex;
    flex-direction: column;
    gap: 6px;
}

.echo-mid {
    display: flex;
    flex-direction: column;
    align-items: center;
}

.v-line {
    width: 2px;
    height: 154px;
    margin: 4px 0 32px;
    background: #262626;
}

.v-line.short {
    height: 34px;
    margin: 0 0 4px;
}

.echo-mid .btn { width: 30px; }
.echo-mid .btn + .btn { margin-top: 6px; }
.echo-mid .link { width: 38px; height: 24px; }

.echo-view {
    display: flex;
    flex-direction: column;
    gap: 2px;
    width: 556px;
    flex: none;
    background: #363636;
}

.echo-view > * { background: #191919; }

.echo-foot {
    flex: 1;
    display: flex;
    align-items: center;
    gap: 10px;
    padding: 0 0 0 12px;
    color: #8a8a8a;
    white-space: pre;
}

.echo-foot label { margin: 0 -4px 0 4px; }
.echo-foot .res { margin-left: 8px; }

.echo-foot b {
    font-weight: 500;
    color: #5bc0d6;
}

.echo-out {
    flex: 1;
    display: flex;
    gap: 14px;
    min-width: 0;
    margin-right: -4px;
    padding: 5px 0 8px 6px;
    overflow: hidden;
}

.echo-out-a { width: 108px; flex: none; }
.echo-out-b { width: 82px; flex: none; }
.stack.tight { gap: 4px; }

/* ---------- status ---------- */
.status {
    display: flex;
    align-items: center;
    height: 46px;
    margin: 14px 24px 0 22px;
}

.status-text {
    flex: 1;
    height: 38px;
    margin-left: 32px;
    border-radius: 5px;
    background: #363636;
}

.status-play {
    display: flex;
    align-items: center;
    justify-content: center;
    width: 38px;
    height: 38px;
    margin-left: 20px;
    background: #363636;
    border-radius: 5px 0 0 5px;
}

.status-bar {
    width: 400px;
    height: 38px;
    margin-left: 2px;
    border-radius: 0 5px 5px 0;
    background: #363636;
}

.chain {
    display: flex;
    align-items: center;
    margin-left: 18px;
    height: 38px;
    background: #363636;
    border-radius: 5px;
}

.chain-fold {
    display: flex;
    align-items: center;
    justify-content: center;
    width: 38px;
    height: 38px;
    background: #f3b063;
    border-radius: 5px 0 0 5px;
}

.chain-name {
    width: 116px;
    padding-left: 14px;
}

.levels { margin-left: 32px; }
.fold { margin-left: 12px; }
```
FILE: script.js
```js
const BLUE = '#95a5f8', PINK = '#f09aa8', ORANGE = '#f3a77d', YELLOW = '#f6f28a';
const PURPLE = '#a998e0', BROWN = '#94836c', GREY = '#7c7c7c';

// dB value -> pixel on the fader scale
const SCALE = [[6, 3], [0, 79], [-6, 153], [-12, 229], [-18, 303], [-24, 377], [-30, 453],
    [-36, 519], [-42, 577], [-48, 625], [-54, 671], [-60, 713], [-70, 743]];

// bars: [peak hold, level top, rms top] per channel, in meter pixels
// clip: [from, to, [clip edges]] in stop row pixels
const tracks = [
    { color: BLUE, cut: true, band: true, a: -150, b: 15, menu: true, grey: true,
        bars: [[303, 350, 570], [281, 323, 524]], clip: [[88, 148, [97, 127]]] },
    { name: 'Shaker', color: BLUE, band: true, num: '10', peak: '-18.7', vol: -8.3, a: -150, b: -150, menu: true, out: 'Shaker/Hat', grey: true, pan: -38,
        bars: [[310, 354, 522], [331, 406, 562]], clip: [[0, 60, [9, 39]], [68, 148, [69, 97, 127]]], cursor: 74 },
    { name: 'Snare 909', color: BLUE, num: '11', peak: '-13.3', vol: -6.6, a: 79, b: -150, menu: true, out: 'Main', cursor: 75 },
    { name: 'Clap 909', color: BLUE, num: '12', peak: '-18.1', vol: -4.7, a: 29, b: 47, menu: true, out: 'Main', cursor: 75 },
    { name: 'Lead', color: PINK, num: '13', state: 'faint', peak: '-6.35', vol: -4, a: 20, b: 74, menu: true, out: 'Main', grey: true,
        bars: [[198, 208, 360], [186, 190, 360]], clip: [[8, 148, [9, 69]]], cursor: 75 },
    { name: 'Pads', color: ORANGE, fold: true, num: '14', state: 'on', solo: true, noarm: true, peak: '-22.6', vol: -11.1, a: 45, b: 150, out: 'Main' },
    { name: '15 Analog', color: ORANGE, band: true, num: '15', state: 'on', peak: '-10.1', vol: -6.3, a: -150, b: -150, menu: true, out: 'Pads', cursor: 75 },
    { name: '16 Wavetable', color: ORANGE, band: true, num: '16', state: 'on', peak: '-13.8', vol: -14.3, a: -150, b: -150, menu: true, out: 'Pads', cursor: 75 },
    { name: 'Bass Break', color: YELLOW, num: '17', peak: '-16.6', vol: -4.4, a: -150, b: -150, menu: true, out: 'Main', cursor: 75 },
    { name: 'ARP 1', color: PURPLE, num: '18', peak: '-18.0', vol: -7.3, a: 20, b: 110, menu: true, out: 'Main', grey: true,
        bars: [[325, 420, 554], [303, 396, 528]], clip: [[0, 148, [8, 68, 88, 128]]], cursor: 75 },
    { name: 'ARP 2', color: PURPLE, num: '19', peak: '-28.5', vol: -14.2, a: 20, b: -45, menu: true, out: 'Main', grey: true,
        bars: [[460, 529, 615], [442, 529, 615]], clip: [[0, 148, [8, 68, 88, 128]]], cursor: 75 },
    { name: 'Noise Hit', color: BROWN, selected: true, num: '20', solo: true, peak: '-25.6', vol: -13.3, a: 79, b: 79, menu: true, out: 'Main',
        bars: [[405, 416, 547], [401, 427, 551]], clip: [[68, 126, [69]]], cursor: 75 },
    { name: 'Noise LFO', color: BROWN, num: '21', solo: true, peak: '-14.8', vol: 0, a: -150, b: -150, menu: true, out: 'Main', cursor: 75 },
    { name: 'White Noise', color: BROWN, num: '22', solo: true, peak: '-19.2', vol: -16.6, a: -150, b: 90, menu: true, out: 'Main',
        bars: [[383, 417, 494], [380, 417, 494]], clip: [[0, 148, [69]]], cursor: 75 },
    { name: 'Background', color: BROWN, num: '23', solo: true, peak: '-41.3', vol: -24.6, a: 60, b: 140, menu: true, out: 'Main',
        bars: [[590, 610, 650], [586, 597, 648]], clip: [[0, 148, [69]]], cursor: 75 },
    { drop: true },
    { name: 'A Room', color: GREY, ret: true, num: 'A', state: 'on', noarm: true, peak: '-34.9', vol: 0, a: -150, b: -150, off: true, out: 'Main',
        bars: [[539, 623, 635], [556, 609, 646]] },
    { name: 'B Stereo', color: GREY, ret: true, num: 'B', state: 'on', noarm: true, peak: '-20.7', vol: -1.9, a: -150, b: -150, off: true, out: 'Main',
        bars: [[424, 436, 556], [399, 400, 549]] },
    { name: 'Main', color: GREY, main: true, peak: '-0.48', vol: 0,
        bars: [[199, 231, 305], [117, 219, 292]] }
];

function polar(r, deg) {
    const t = deg * Math.PI / 180;
    return (r * Math.sin(t)).toFixed(1) + ' ' + (-r * Math.cos(t)).toFixed(1);
}

function arc(r, from, to) {
    return `M${polar(r, from)}A${r} ${r} 0 ${to - from > 180 ? 1 : 0} 1 ${polar(r, to)}`;
}

function knob(type, at, off, color) {
    const small = type === 'uni' || type === 'bi';
    const r = small ? 17 : 24;
    const min = small ? -180 : -150, max = small ? 90 : 150;
    const zero = type === 'pan' ? 0 : type === 'bi' ? -45 : min;
    const track = off ? '#2a2a2a' : '#141414';
    const lit = color || (off ? '#777' : '#5bc0d6');
    const box = small ? [-19, -19, 38, 38] : type === 'pan' ? [-26, -37, 52, 61] : [-26, -26, 52, 52];
    let s = `<svg width="${box[2]}" height="${box[3]}" viewBox="${box.join(' ')}" overflow="visible" fill="none">`;
    s += `<path d="${arc(r, min, max)}" stroke="${track}" stroke-width="4"/>`;
    s += `<path d="M${polar(r - 4, at)}L${polar(r + 4, at)}" stroke="var(--panel)" stroke-width="9"/>`;
    if (at !== zero) {
        s += `<path d="${arc(r, Math.min(zero, at), Math.max(zero, at))}" stroke="${lit}" stroke-width="4"/>`;
    }
    if (type === 'pan') {
        s += `<path d="M-7-37H7L0-28z" fill="${at ? lit : track}"/>`;
    }
    if (type === 'bi') {
        s += `<path d="M-15-24v10h-11z" fill="${track}"/>`;
    }
    s += `<path d="M0 0L${polar(r + 1, at)}" stroke="${off ? '#2a2a2a' : '#1a1a1a'}" stroke-width="4" stroke-linecap="round"/></svg>`;
    return s;
}

function knobSpan(type, at, off, color) {
    return `<span data-knob="${type}">${knob(type, at, off, color)}</span>`;
}

function dbToY(db) {
    for (let i = 1; i < SCALE.length; i++) {
        const [d0, y0] = SCALE[i - 1], [d1, y1] = SCALE[i];
        if (db >= d1) return Math.round(y0 + (d0 - db) / (d0 - d1) * (y1 - y0));
    }
    return 743;
}

function meter(t) {
    let s = '<svg class="meter" width="26" height="756"><rect width="26" height="756" rx="4" fill="#191919"/>';
    s += '<path d="M13 2v752" stroke="#464646" stroke-width="2"/><path d="M2 79h10M14 79h10" stroke="#8a8a8a" stroke-width="2"/>';
    const bright = t.grey ? '#727272' : '#73f46e', dim = t.grey ? '#585858' : '#4ea850';
    (t.bars || []).forEach(([hold, top, rms], i) => {
        const x = 2 + i * 12;
        const holdColor = t.main ? ['#e8c83c', '#e07828'][i] : bright;
        s += `<path d="M${x} ${hold}h10" stroke="${holdColor}" stroke-width="2"/>`;
        s += `<rect x="${x}" y="${top}" width="10" height="${rms - top}" fill="${t.main ? 'url(#hot)' : dim}"/>`;
        s += `<rect x="${x}" y="${rms}" width="10" height="${754 - rms}" fill="${bright}"/>`;
    });
    if (t.main) {
        s += '<defs><linearGradient id="hot" x1="0" y1="0" x2="0" y2="1"><stop offset="0" stop-color="#9c9a32"/><stop offset="0.85" stop-color="#5ca538"/><stop offset="1" stop-color="#4ea850"/></linearGradient></defs>';
    }
    return s + '</svg>';
}

function ticks() {
    const d = SCALE.map(([, y], i) => i < SCALE.length - 1 ? `M0 ${y}h6` : '').join('');
    return `<svg width="6" height="756"><path d="${d}" stroke="#777" stroke-width="2"/><path d="M0 743h6" stroke="#555" stroke-width="2"/></svg>`;
}

function head(t) {
    const band = t.band ? '<div class="track-band"></div>' : '';
    const fold = t.fold ? '<svg width="26" height="26"><circle cx="13" cy="13" r="12" fill="none" stroke="#2a2a2a" stroke-width="2"/><path d="M6 8h9M10 13h9M10 18h9" stroke="#2a2a2a" stroke-width="2"/></svg>' : '';
    return `<div class="track-head">${band}<div class="track-name">${t.name || ''}${fold}</div></div>`;
}

function slots(t) {
    let s = '<div class="slots">';
    for (let n = 2; n <= 11; n++) {
        const inner = t.main ? `<i class="scene-play"></i><span>${n}</span>` : t.ret ? '' : '<i class="square"></i>';
        s += `<div class="slot">${inner}</div>`;
    }
    return s + '</div>';
}

function stopRow(t) {
    if (t.ret) return '<div class="stop-row"></div>';
    if (t.main) {
        return `<div class="stop-row"><i class="square"></i>
            <button class="stop-btn" aria-label="Back to arrangement"><svg width="18" height="18"><path d="M2 0v18" stroke="#333" stroke-width="2"/><path d="M5 1l5 4v8l-5 4zM11 5l3 2v4l-3 2z" fill="#333"/><path d="M15 7l3 2-3 2z" fill="#333"/></svg></button>
            <button class="stop-btn wide" aria-label="Scene select"><svg width="28" height="14"><path d="M0 0l14 7-14 7z" fill="#b5b5b5"/><path d="M17 2h10M17 7h10M17 12h10" stroke="#b5b5b5" stroke-width="2"/></svg></button></div>`;
    }
    const dark = { [BLUE]: '#3a4aa8', [PINK]: '#a8404c', [PURPLE]: '#54408c', [BROWN]: '#4a3a28' }[t.color];
    let s = '<svg width="148" height="26">';
    (t.clip || []).forEach(([from, to, cuts]) => {
        s += `<rect x="${from}" width="${to - from}" height="26" fill="${t.color}"/>`;
        cuts.forEach(c => s += `<path d="M${c} 0v26" stroke="${dark}" stroke-width="2"/>`);
    });
    if (t.cursor) s += `<path d="M${t.cursor} 0v26" stroke="#a5a5a5" stroke-width="2"/>`;
    return `<div class="stop-row"><i class="square"></i>${s}</svg></div>`;
}

function io(t) {
    if (t.main) {
        return `<div class="io"><label class="lbl" for="cueOut">Cue Out</label><select id="cueOut" class="menu output"><option>1/2</option></select>
            <label class="lbl" for="mainOut">Main Out</label><select id="mainOut" class="menu output"><option>1/2</option></select></div>`;
    }
    // the first track is scrolled out, only its right edge shows
    if (t.cut) {
        return `<div class="io"><select class="menu" aria-label="Input"></select>
            <select class="menu channels" aria-label="Input channel"><option>All Channels</option></select>
            <span class="lbl"></span>
            <div class="monitor"><button class="btn" aria-label="In"></button><button class="btn on" aria-label="Auto"></button><button class="btn">Off</button></div>
            <span class="lbl"></span><select class="menu" aria-label="Output"></select><div class="blank"></div></div>`;
    }
    const id = 'out' + t.num;
    const from = t.menu ? `<label class="lbl" for="in${t.num}">MIDI From</label>
        <select class="menu" id="in${t.num}"><option>All Ins</option></select>
        <select class="menu channels" aria-label="Input channel"><option>All Channels</option></select>
        <span class="lbl">Monitor</span>
        <div class="monitor"><button class="btn">In</button><button class="btn on">Auto</button><button class="btn">Off</button></div>` : '';
    return `<div class="io">${from}<label class="lbl" for="${id}">Audio To</label><select class="menu" id="${id}"><option>${t.out}</option></select><div class="blank"></div></div>`;
}

function sends(t) {
    if (t.main) {
        return '<div class="main-sends"><span class="title">Sends</span><i></i><i></i><button class="btn on">Post</button><button class="btn on">Post</button></div>';
    }
    return `<div class="sends"><div class="send">${knob('big', t.a, t.off)}<span>${t.cut ? '' : 'A'}</span></div><div class="send">${knob('big', t.b, t.off)}<span>B</span></div><span class="title">Sends</span></div>`;
}

function stripLeft(t) {
    if (t.cut) return '';
    const vol = t.vol === 0 ? '0' : t.vol.toFixed(1);
    let left = `<div class="readout pill">${t.peak}</div><div class="readout">${vol}</div>${knobSpan('pan', t.pan || 0)}`;
    if (t.main) {
        return left + `<span class="solo-gap"></span><button class="btn grey solo-cue">Solo</button>
            <div class="cue">${knobSpan('big', 105, false, '#4768b4')}<svg width="20" height="18"><use href="#phones"/></svg></div>`;
    }
    left += `<button class="btn activator ${t.state || 'grey'}">${t.num}</button><button class="btn small ${t.solo ? 'blue' : ''}">S</button>`;
    left += t.noarm ? '<span class="no-arm"></span>' : '<button class="btn small" aria-label="Arm"><svg width="16" height="16"><circle cx="8" cy="8" r="7" fill="#b5b5b5"/><path d="M9 3v7" stroke="#1e1e1e" stroke-width="2"/><circle cx="7" cy="10" r="2" fill="#1e1e1e"/></svg></button>';
    return left;
}

function mixer(t) {
    const labels = t.main ? '' : ['6', '0', '6', '12', '18', '24', '30', '36', '42', '48', '54', '60'].map(n => `<span>${n}</span>`).join('');
    const fader = t.cut ? '' : `<input class="fader" type="range" min="0" max="732" value="${744 - dbToY(t.vol)}" aria-label="Volume">`;
    return `<div class="mixer"><div class="strip-left">${stripLeft(t)}</div>
        <div class="fader-box">${ticks()}${fader}</div>
        ${meter(t)}<div class="db">${labels}</div></div>`;
}

function track(t) {
    if (t.drop) return '<div class="drop">Drop Files<br>and Devices<br>Here</div>';
    const cls = 'track' + (t.selected ? ' selected' : '') + (t.main ? ' main' : '');
    const html = `<div class="${cls}" style="--color:${t.color}">${head(t)}${slots(t)}${stopRow(t)}${io(t)}${sends(t)}${mixer(t)}<div class="track-foot"></div></div>`;
    return t.cut ? `<div class="track-clip">${html}</div>` : html;
}

document.getElementById('session').innerHTML = tracks.map(track).join('');

document.querySelectorAll('.rack [data-knob]').forEach(el => {
    el.innerHTML = knob(el.dataset.knob, Number(el.dataset.at), 'off' in el.dataset);
});

// activity dots at the left of the rack
let dots = '';
for (let i = 0; i < 21; i++) {
    dots += `<circle cx="3" cy="${3 + i * 10}" r="3" fill="${i === 20 ? '#f3b063' : '#191919'}"/>`;
}
document.getElementById('rackDots').innerHTML = dots;

// log frequency grid; x100 is the position of 100 Hz
function freqGrid(x100, decade, width, height) {
    let minor = '', major = '';
    for (let dec = 10; dec <= 10000; dec *= 10) {
        for (let n = 1; n < 10; n++) {
            const x = Math.round(x100 + decade * Math.log10(dec * n / 100));
            if (x < 30 || x > width) continue;
            const bottom = n === 1 || n > 7 ? height - 22 : height;
            if (n === 1) major += `M${x} 0V${bottom}`;
            else minor += `M${x} 0V${bottom}`;
        }
    }
    return `<path d="${minor}" stroke="#fff" stroke-opacity="0.1" stroke-width="2"/><path d="${major}" stroke="#fff" stroke-opacity="0.2" stroke-width="2"/>`;
}

// EQ Eight display
const spectrum = [[69, 260], [107, 250], [135, 233], [157, 215], [168, 210], [189, 210], [202, 193], [210, 180],
    [216, 171], [228, 176], [244, 165], [254, 167], [264, 155], [271, 142], [277, 145], [284, 140], [292, 148], [302, 140],
    [308, 143], [317, 153], [327, 167], [336, 151], [343, 158], [352, 150], [358, 157], [368, 145], [374, 152], [382, 168],
    [389, 149], [396, 139], [400, 153], [404, 136], [410, 156], [418, 131], [425, 145], [430, 136], [437, 152], [445, 137],
    [451, 152], [457, 142], [466, 164], [473, 149], [478, 147], [486, 159]];
let seed = 7;
for (let x = 490, i = 0; x < 748; x += 3, i++) {
    seed = (seed * 73 + 41) % 101;
    const top = x < 600 ? 142 : 142 + (x - 600) * 0.18;
    spectrum.push([x, Math.round(top + (i % 2 ? 12 : 2) + seed / 101 * 8 - 4)]);
}
spectrum.push([748, 172]);
let hLines = '';
[27, 81, 187, 241].forEach(y => hLines += `M44 ${y}h704`);
const dbLabels = [['12', 27], ['6', 81], ['0', 135], ['-6', 187], ['-12', 241]]
    .map(([n, y]) => `<text x="38" y="${y + 7}" text-anchor="end">${n}</text>`).join('');
document.getElementById('eqGraph').innerHTML = `
    <path d="M31 268Q45 262 ${spectrum.map(p => p.join(' ')).join('L')}V268z" fill="#525252"/>
    ${freqGrid(225, 223, 748, 268)}
    <path d="${hLines}" stroke="#fff" stroke-opacity="0.1" stroke-width="2"/><path d="M44 135h704" stroke="#fff" stroke-opacity="0.2" stroke-width="2"/>
    <g fill="#8a8a8a">${dbLabels}<text x="224" y="264" text-anchor="middle">100</text><text x="446" y="264" text-anchor="middle">1k</text><text x="670" y="264" text-anchor="middle">10k</text></g>
    <path d="M178 268C200 225 215 195 240 175C262 155 290 134 370 134H748" fill="none" stroke="#5bc0d6" stroke-width="3"/>
    <circle cx="265" cy="165" r="13" fill="#f3b063"/><text x="265" y="172" text-anchor="middle" fill="#111">1</text>`;

const bell = 'M0 9h6L11 1h9l5 8h5M6 9l5 8h9l5-8';
const bandIcons = ['M1 17V10Q1 2 9 2H30', bell, bell, 'M0 9h12M30 1h-9l-8 8 8 8h9', bell, bell, bell, 'M0 2H21Q29 2 29 10V17'];
document.getElementById('bands').innerHTML = bandIcons.map((d, i) => `
    <div class="band${i ? '' : ' chosen'}">
        <button class="picker${i ? ' clear' : ''}" aria-label="Filter ${i + 1} type"><svg width="32" height="20"><path d="${d}" fill="none" stroke="#b5b5b5" stroke-width="2"/></svg><span class="caret"></span></button>
        <label><input type="checkbox"${i ? '' : ' checked'}>${i + 1}</label>
    </div>`).join('');

// Echo tunnel: [rise, half width, opacity]
const rings = [[160, 252, 1], [117, 183, 1], [92, 143, 0.75], [75, 118, 0.6], [64, 100, 0.5], [56, 88, 0.42], [50, 78, 0.35],
    [45, 71, 0.3], [41, 65, 0.25], [38, 60, 0.22], [35, 56, 0.2], [32, 52, 0.15]];
let tunnel = '<defs><radialGradient id="hole" cx="0.5" cy="1" r="0.9"><stop offset="0.3" stop-color="#191919"/><stop offset="1" stop-color="#3a2c20" stop-opacity="0.6"/></radialGradient></defs>';
tunnel += '<path d="M222 176A66 90 0 0 1 334 176z" fill="url(#hole)"/>';
rings.forEach(([h, w, o], i) => {
    const r = Math.round((w * w + h * h) / (2 * h));
    tunnel += `<path d="M${278 - w} 176A${r} ${r} 0 0 1 ${278 + w} 176" fill="none" stroke="#f3b063" stroke-opacity="${o}" stroke-width="${i < 3 ? 3 : 2}"/>`;
});
[[16, 4], [48, 3], [69, 3], [84, 2.5], [96, 2], [105, 2], [112, 1.5], [118, 1.5], [123, 1]].forEach(([y, r]) => tunnel += `<circle cx="278" cy="${y}" r="${r}" fill="#fff"/>`);
document.getElementById('echoArcs').innerHTML = tunnel;

document.getElementById('echoFilter').innerHTML = `
    ${freqGrid(131, 184, 556, 120)}
    <path d="M0 41h556" stroke="#fff" stroke-opacity="0.2" stroke-width="2"/><path d="M0 79h556" stroke="#fff" stroke-opacity="0.1" stroke-width="2"/>
    <g fill="#8a8a8a"><text x="129" y="116" text-anchor="middle">100</text><text x="313" y="116" text-anchor="middle">1k</text><text x="497" y="116" text-anchor="middle">10k</text></g>
    <path d="M60 120C85 85 105 65 129 55C140 38 155 30 175 31C210 32 240 39 304 39C350 39 385 34 427 25C440 21 462 18 471 26C500 45 525 80 554 120" fill="none" stroke="#5bc0d6" stroke-width="3"/>
    <circle cx="129" cy="55" r="13" fill="#f3b063"/><circle cx="484" cy="31" r="12" fill="none" stroke="#f3b063" stroke-width="2"/>`;

// miniature of the device chain
let mini = '<rect y="4" width="360" height="38" fill="#2e2e2e"/><rect x="4" y="5" width="108" height="3" fill="#697d87"/>';
for (let i = 0; i < 34; i++) {
    mini += `<path d="M${6 + i * 10} 12h6M${6 + i * 10} 38h6" stroke="#707070" stroke-width="1"/>`;
}
mini += '<path d="M12 16h78v18H12zM121 8h60v24h-60zM212 7h42v30h-42zM292 14h60v18h-60z" fill="#151515"/>';
mini += '<path d="M15 19v6h14v8M148 32q4-8 12-10h20M214 36q3-8 10-8h20q6 0 8 8M292 18q6 8 12 2" fill="none" stroke="#5bc0d6" stroke-width="1"/>';
mini += '<path d="M216 24a17 15 0 0 1 34 0M222 24a11 9 0 0 1 22 0" fill="none" stroke="#f3b063" stroke-width="1"/>';
mini += '<path d="M38 11h6M66 11h6M184 12h6M184 22h6M193 20h16M262 12h14M278 12h14M318 38h8M330 10h12" stroke="#f3b063" stroke-width="2"/>';
mini += '<path d="M112 24v16M190 24v16M274 22v18M357 20v18" stroke="#4ea850" stroke-width="1"/>';
mini += '<rect x="2" y="2" width="255" height="42" rx="5" fill="none" stroke="#777" stroke-width="4"/>';
document.getElementById('overview').innerHTML = mini;
```
